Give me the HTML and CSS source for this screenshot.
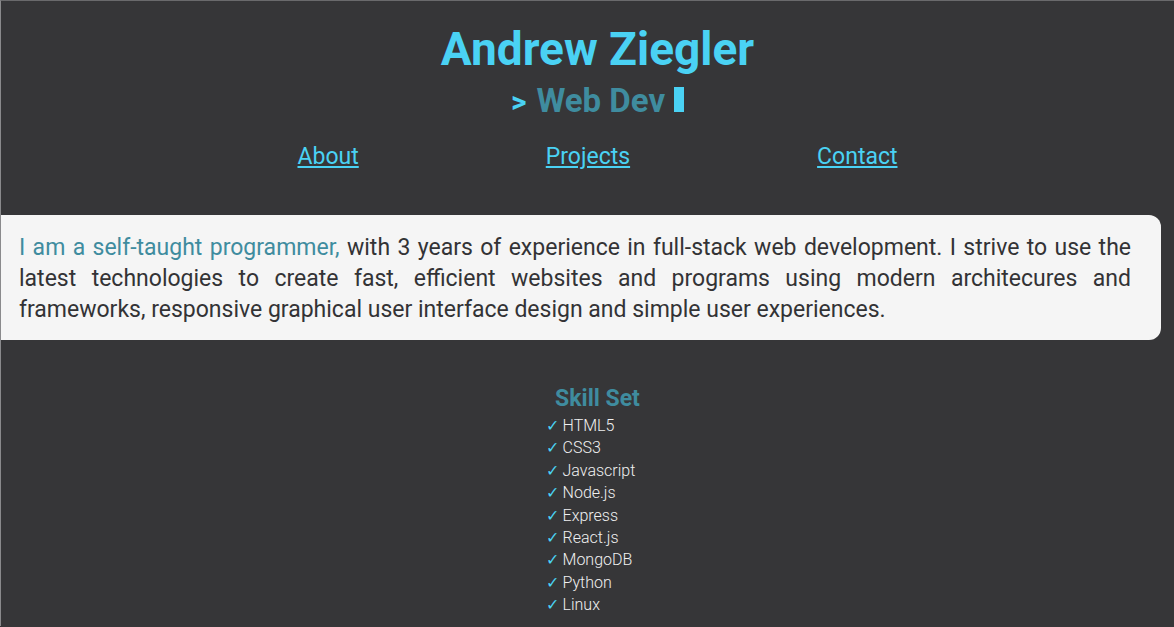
FILE: index.html
```html
<!DOCTYPE html>
<html lang="en">
<head>
<meta charset="utf-8">
<title>Andrew Ziegler</title>
<link rel="stylesheet" href="styles.css">
</head>
<body>
<div class="page">
  <header class="header">
    <h1 class="name">Andrew Ziegler</h1>
    <div class="role"><span class="prompt">&gt;</span><span class="role-text">Web Dev</span><span class="cursor"></span></div>
    <nav class="nav">
      <a href="#about">About</a>
      <a href="#projects">Projects</a>
      <a href="#contact">Contact</a>
    </nav>
  </header>
  <section class="about">
    <p><span class="accent">I am a self-taught programmer,</span> with 3 years of experience in full-stack web development. I strive to use the latest technologies to create fast, efficient websites and programs using modern architecures and frameworks, responsive graphical user interface design and simple user experiences.</p>
  </section>
  <section class="skills">
    <h2 class="skills-title">Skill Set</h2>
    <ul class="skill-list">
      <li><span class="check">✓</span> HTML5</li>
      <li><span class="check">✓</span> CSS3</li>
      <li><span class="check">✓</span> Javascript</li>
      <li><span class="check">✓</span> Node.js</li>
      <li><span class="check">✓</span> Express</li>
      <li><span class="check">✓</span> React.js</li>
      <li><span class="check">✓</span> MongoDB</li>
      <li><span class="check">✓</span> Python</li>
      <li><span class="check">✓</span> Linux</li>
    </ul>
  </section>
</div>
</body>
</html>
```
FILE: styles.css
```css
html, body {
  margin: 0;
  padding: 0;
}
body {
  background: #363638;
  font-family: Roboto, "Liberation Sans", sans-serif;
  color: #e6e6e6;
  overflow: hidden;
}
.page {
  border-left: 1px solid #8a8a8c;
  border-top: 1px solid #6a6a6c;
  min-height: 626px;
  box-sizing: border-box;
}
.header {
  display: flex;
  flex-direction: column;
  align-items: center;
  padding-left: 20px;
  padding-top: 20px;
}
.name {
  margin: 0;
  font-size: 46px;
  font-weight: 700;
  line-height: 56px;
  color: #4ad2f4;
}
.role {
  font-size: 33px;
  font-weight: 700;
  line-height: 40px;
  margin-top: 4px;
  display: flex;
  align-items: baseline;
}
.prompt {
  color: #4ad2f4;
  font-size: 30px;
  margin-right: 10px;
}
.role-text {
  color: #3f8c9f;
}
.cursor {
  display: inline-block;
  width: 10px;
  height: 25px;
  background: #4ad2f4;
  margin-left: 9px;
}
.nav {
  display: flex;
  gap: 187px;
  margin-top: 20px;
}
.nav a {
  color: #4ad2f4;
  font-size: 23px;
  line-height: 30px;
  text-decoration: underline;
}
.about {
  margin-top: 43px;
  width: 1160px;
  background: #f5f5f5;
  border-radius: 0 12px 12px 0;
  padding: 17px 30px 15px 18px;
  box-sizing: border-box;
}
.about p {
  margin: 0;
  font-size: 23px;
  line-height: 31px;
  color: #333335;
  text-align: justify;
}
.accent {
  color: #3f8c9f;
}
.skills {
  display: flex;
  flex-direction: column;
  align-items: center;
  padding-left: 20px;
  margin-top: 43px;
}
.skills-title {
  margin: 0;
  font-size: 23px;
  font-weight: 700;
  line-height: 32px;
  color: #3f8c9f;
}
.skill-list {
  list-style: none;
  margin: 0;
  padding: 0;
  font-size: 16px;
  font-weight: 300;
  line-height: 22.4px;
  color: #f0f0f0;
  margin-right: 14px;
}
.check {
  color: #4ad2f4;
  font-family: "DejaVu Sans", sans-serif;
}
```
